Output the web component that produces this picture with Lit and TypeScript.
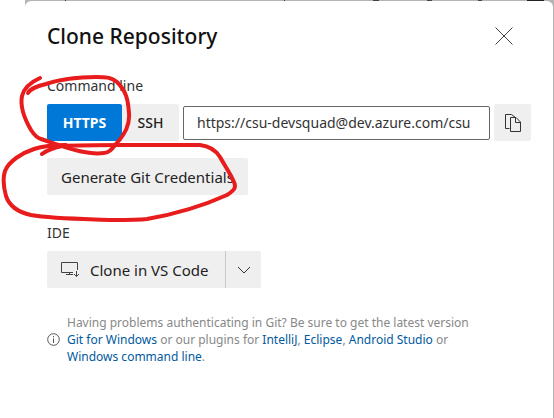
import { LitElement, html, css, svg } from "lit";
import { customElement, state } from "lit/decorators.js";

const copyIcon = svg`<svg width="18" height="20" viewBox="0 0 18 20" fill="none" stroke="#333" stroke-width="1" aria-hidden="true">
  <path d="M5.500 15.500H1.500V1.500H7.500L11.500 4.500"/>
  <path d="M6.500 4.500H12L16.500 9V18.500H6.500Z"/><path d="M11.500 4.500V9.500H16.500"/></svg>`;

const monitorIcon = svg`<svg width="18" height="16" viewBox="0 0 18 16" fill="none" stroke="#444" aria-hidden="true">
  <path d="M12 10.500H.5V.5H16.500V8"/><path d="M8.500 10.500V12.500M5 12.500H12"/>
  <path d="M15.500 9V14.500M13 12L15.500 14.500L18 12"/></svg>`;

@customElement("app-root")
export class AppRoot extends LitElement {
  @state() private protocol = "HTTPS";

  static styles = css`
    :host {
      display: block;
      position: relative;
      min-height: 100vh;
      padding-left: 25px;
      box-sizing: border-box;
      background: #fff;
      color: #222;
      font: 14px/20px "Noto Sans", "Open Sans", sans-serif;
      overflow: hidden;
    }
    * { box-sizing: border-box; }
    .backdrop {
      min-height: 100vh;
      padding: 1px 1px 0 0;
      background: linear-gradient(90deg, #b4b4b4 0 40px, #333 40px 41px, #b4b4b4 41px 259px, #333 259px 260px, #b4b4b4 260px 348px, #445 348px 354px, #b4b4b4 354px 402px, #445 402px 407px, #b4b4b4 407px 453px, #445 453px 457px, #b4b4b4 457px 502px, #222 502px 519px, #b4b4b4 519px);
    }
    .dialog {
      min-height: calc(100vh - 1px);
      padding: 16px 22px 24px;
      border-radius: 6px 6px 0 0;
      background: #fff;
    }
    header { display: flex; align-items: center; justify-content: space-between; height: 37px; }
    h1 { margin: 0; color: #111; font-size: 21px; line-height: 32px; font-weight: 500; }
    button {
      display: flex;
      align-items: center;
      justify-content: center;
      height: 37px;
      padding: 0 14px;
      border: 0;
      border-radius: 2px;
      background: #efefef;
      color: #222;
      font: inherit;
      font-size: 15px;
      white-space: nowrap;
    }
    .close { width: 32px; padding: 0; margin-right: 11px; background: none; }
    .label { display: block; color: #333; margin: 22px 0 8px; }
    .row { display: flex; align-items: center; }
    .tab { width: 57px; font-size: 14px; font-weight: 500; }
    .tab.active { width: 75px; background: #0078d7; color: #fff; font-weight: 700; }
    .url {
      flex: 1;
      min-width: 0;
      height: 34px;
      margin: 0 4px;
      padding: 0 13px;
      border: 1px solid #666;
      border-radius: 2px;
      background: #fff;
      color: #333;
      font: inherit;
    }
    .copy { width: 37px; padding: 0; }
    .generate { margin-top: 17px; height: 37px; }
    .ide { margin: 28px 0 8px; }
    .clone { width: 178px; gap: 11px; justify-content: flex-start; border-radius: 2px 0 0 2px; }
    .more { width: 36px; padding: 0; border-left: 1px solid #c8c8c8; border-radius: 0 2px 2px 0; }
    .help { display: flex; align-items: center; gap: 7px; margin-top: 26px; color: #888; font-size: 12px; line-height: 17px; }
    .help svg { flex: none; }
    .help p { margin: 0; }
    a { color: #005a9e; text-decoration: none; }
    .ink { position: absolute; left: 0; top: 0; pointer-events: none; }
  `;

  private tab(name: string) {
    const active = this.protocol === name;
    return html`<button class="tab ${active ? "active" : ""}" aria-pressed=${active} @click=${() => (this.protocol = name)}>${name}</button>`;
  }

  render() {
    return html`
      <div class="backdrop">
        <main class="dialog">
          <header>
            <h1>Clone Repository</h1>
            <button class="close" aria-label="Close">
              <svg width="18" height="18" viewBox="0 0 18 18" stroke="#444" aria-hidden="true"><path d="M.5 .5L17.500 17.500M17.500 .5L.5 17.500"/></svg>
            </button>
          </header>
          <label class="label" for="url">Command line</label>
          <div class="row">
            ${this.tab("HTTPS")}${this.tab("SSH")}
            <input class="url" id="url" readonly value="https://csu-devsquad@dev.azure.com/csu" />
            <button class="copy" aria-label="Copy URL">${copyIcon}</button>
          </div>
          <button class="generate">Generate Git Credentials</button>
          <div class="label ide">IDE</div>
          <div class="row">
            <button class="clone">${monitorIcon}Clone in VS Code</button>
            <button class="more" aria-label="Choose IDE">
              <svg width="14" height="8" viewBox="0 0 14 8" fill="none" stroke="#333" aria-hidden="true"><path d="M1 1L7 7L13 1"/></svg>
            </button>
          </div>
          <div class="help">
            <svg width="13" height="13" viewBox="0 0 13 13" fill="none" stroke="#555" aria-hidden="true"><circle cx="6.500" cy="6.500" r="5.800"/><path d="M6.500 5.500V10M6.500 3V4.300"/></svg>
            <p>
              Having problems authenticating in Git? Be sure to get the latest version<br />
              <a href="#git">Git for Windows</a> or our plugins for <a href="#intellij">IntelliJ</a>,
              <a href="#eclipse">Eclipse</a>, <a href="#studio">Android Studio</a> or<br />
              <a href="#cli">Windows command line</a>.
            </p>
          </div>
        </main>
      </div>
      <svg class="ink" width="554" height="418" viewBox="0 0 554 418" fill="none" stroke="#e81c1c" stroke-width="4" stroke-linecap="round" stroke-linejoin="round" aria-hidden="true">
        <path d="M40 78C31 82 24 88 22 96C20 106 24 118 31 130C35 136 37 138 41 139C53 143 66 148 79 151C88 153 97 154 104 153C109 153 112 149 116 144C125 134 130 125 129 113C128 99 126 91 117 82C111 77 105 77 96 77C77 77 61 79 46 84C38 86 31 88 28 93"/>
        <path d="M42 154C47 150 53 148 62 146C79 145 102 145 125 145H200C209 146 215 149 220 157C225 166 230 173 233 180C237 187 235 190 227 195C207 204 176 214 147 219C138 220 128 220 113 220C88 219 54 219 31 215C17 212 9 205 6 196C3 185 3 177 5 171C9 161 22 153 34 149C43 146 53 145 66 145"/>
      </svg>`;
  }
}
